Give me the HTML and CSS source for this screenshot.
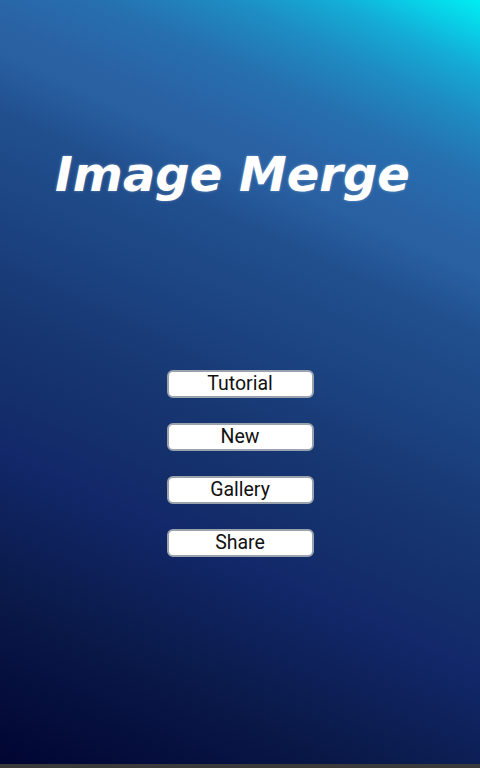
FILE: index.html
```html
<!DOCTYPE html>
<html>
<head>
<meta charset="utf-8">
<link rel="stylesheet" href="styles.css">
</head>
<body>
<div class="screen">
  <h1 class="title">Image Merge</h1>
  <div class="menu">
    <button class="btn">Tutorial</button>
    <button class="btn">New</button>
    <button class="btn">Gallery</button>
    <button class="btn">Share</button>
  </div>
</div>
<div class="navbar"></div>
</body>
</html>
```
FILE: styles.css
```css
html, body {
  margin: 0;
  padding: 0;
  width: 480px;
  height: 768px;
  overflow: hidden;
  background: #333;
}
.screen {
  width: 480px;
  height: 764px;
  box-sizing: border-box;
  display: flex;
  flex-direction: column;
  padding-top: 146px;
  background: linear-gradient(205deg,
    #00eef2 0%,
    #08d2e8 3%,
    #14acd6 7%,
    #1e8cc2 12%,
    #2670b0 18%,
    #2a62a4 25%,
    #2860a2 28%,
    #214f8e 34%,
    #1c4482 44%,
    #173772 54%,
    #142e6a 63%,
    #12286a 68%,
    #0a1a4a 82%,
    #010532 100%);
}
.title {
  margin: 0;
  padding-left: 55px;
  font-family: "DejaVu Sans", sans-serif;
  font-weight: bold;
  font-style: italic;
  font-size: 48px;
  line-height: 56px;
  color: #fff;
  text-shadow: 0 0 3px rgba(255, 255, 255, 0.35);
}
.menu {
  margin-top: 168px;
  display: flex;
  flex-direction: column;
  align-items: center;
  gap: 25px;
}
.btn {
  width: 147px;
  height: 28px;
  box-sizing: border-box;
  margin: 0;
  padding: 0;
  background: #fff;
  border: 2px solid #9aa3ad;
  border-radius: 6px;
  font-family: Roboto, sans-serif;
  font-size: 19.5px;
  line-height: 24px;
  color: #111;
}
.navbar {
  height: 4px;
  background: #3a3a3a;
}
```
